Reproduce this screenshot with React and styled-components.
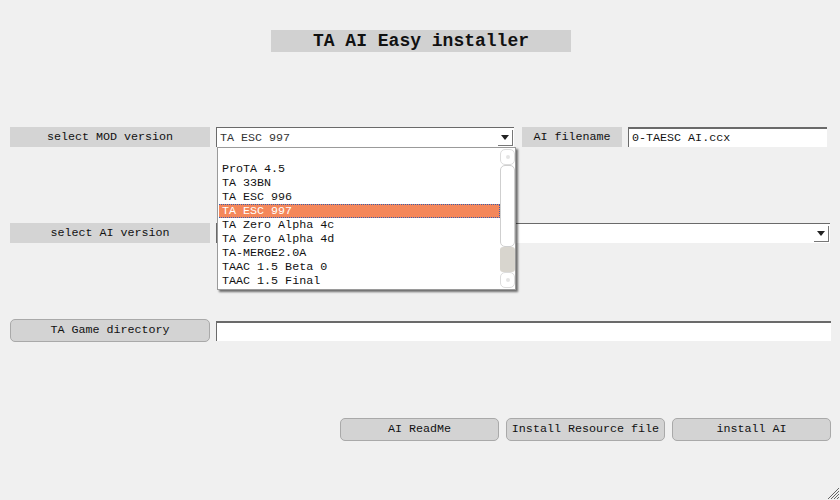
import React, { useState } from 'react';
import styled, { createGlobalStyle } from 'styled-components';

const GlobalStyle = createGlobalStyle`
  html, body {
    margin: 0;
    padding: 0;
    background: #f0f0f0;
  }
`;

const Page = styled.div`
  position: relative;
  width: 840px;
  height: 500px;
  overflow: hidden;
  background: #f0f0f0;
  font-family: "Liberation Mono", "Courier New", monospace;
  font-size: 11.7px;
  color: #111;
  display: flex;
  flex-direction: column;
`;

const TitleRow = styled.div`
  display: flex;
  justify-content: center;
  padding-top: 30px;
  padding-left: 2px;
`;

const Title = styled.div`
  width: 300px;
  height: 22px;
  background: #d1d1d1;
  font-size: 18px;
  font-weight: bold;
  line-height: 22px;
  text-align: center;
`;

const Row = styled.div`
  display: flex;
  align-items: center;
  padding-left: 10px;
  margin-top: ${(p) => p.top}px;
`;

const Label = styled.div`
  width: ${(p) => p.w || 200}px;
  height: 20px;
  line-height: 20px;
  background: #d4d4d4;
  text-align: center;
  flex-shrink: 0;
`;

const Gap = styled.div`
  width: ${(p) => p.w}px;
  flex-shrink: 0;
`;

const SelectBox = styled.div`
  position: relative;
  width: ${(p) => p.w}px;
  height: 20px;
  box-sizing: border-box;
  background: #fff;
  border-top: 1px solid #6a6a6a;
  border-left: 1px solid #6a6a6a;
  display: flex;
  align-items: center;
  flex-shrink: 0;
`;

const SelectText = styled.div`
  flex: 1;
  padding-left: 3px;
  color: #333;
`;

const ArrowBox = styled.div`
  width: 15px;
  height: 16px;
  box-sizing: border-box;
  margin-right: 1px;
  border-right: 1px solid #777;
  border-bottom: 1px solid #777;
  display: flex;
  align-items: center;
  justify-content: center;
  &::after {
    content: '';
    border-left: 4px solid transparent;
    border-right: 4px solid transparent;
    border-top: 5px solid #222;
    margin-top: 1px;
  }
`;

const TextInput = styled.div`
  width: ${(p) => p.w}px;
  height: 20px;
  box-sizing: border-box;
  background: #fff;
  border-top: 2px solid #6a6a6a;
  border-left: 1px solid #6a6a6a;
  padding-left: 3px;
  line-height: 18px;
  flex-shrink: 0;
`;

const DropList = styled.div`
  position: absolute;
  left: 0;
  top: 19px;
  width: 299px;
  height: 143px;
  box-sizing: border-box;
  background: #fff;
  border: 1px solid #9a9a9a;
  box-shadow: 2px 2px 2px rgba(0, 0, 0, 0.55);
  display: flex;
  z-index: 5;
`;

const Items = styled.div`
  flex: 1;
  padding-top: 14px;
`;

const Item = styled.div`
  height: 14px;
  line-height: 14px;
  box-sizing: border-box;
  white-space: nowrap;
  color: ${(p) => (p.active ? '#fff' : '#111')};
  background: ${(p) => (p.active ? '#f4875a' : 'transparent')};
  border: 1px dotted ${(p) => (p.active ? '#3a5fb0' : 'transparent')};
  border-left: none;
  margin: 0 0 0 1px;
  padding-left: 3px;
  display: flex;
  align-items: center;
`;

const Scroll = styled.div`
  width: 15px;
  display: flex;
  flex-direction: column;
  padding: 1px 0;
  box-sizing: border-box;
  background: #fff;
`;

const ScrollBtn = styled.div`
  height: 16px;
  border: 1px solid #dcdcdc;
  border-radius: 5px;
  box-sizing: border-box;
  display: flex;
  align-items: center;
  justify-content: center;
  &::after {
    content: '';
    width: 4px;
    height: 4px;
    border-radius: 2px;
    background: #e4e4e4;
  }
`;

const Thumb = styled.div`
  height: 82px;
  border: 1px solid #cfcfcf;
  border-radius: 5px;
  box-sizing: border-box;
  background: #fff;
`;

const Track = styled.div`
  flex: 1;
  background: #d8d5ce;
  border-radius: 3px;
`;

const Button = styled.div`
  width: ${(p) => p.w || 159}px;
  height: 23px;
  box-sizing: border-box;
  border: 1px solid #a9a9a9;
  border-radius: 5px;
  background: #d3d3d3;
  text-align: center;
  line-height: 21px;
  flex-shrink: 0;
`;

const ButtonRow = styled.div`
  display: flex;
  justify-content: flex-end;
  gap: 7px;
  padding-right: 9px;
  margin-top: 76px;
`;

const Grip = styled.svg`
  position: absolute;
  right: 0;
  bottom: 0;
`;

const mods = [
  'ProTA 4.5',
  'TA 33BN',
  'TA ESC 996',
  'TA ESC 997',
  'TA Zero Alpha 4c',
  'TA Zero Alpha 4d',
  'TA-MERGE2.0A',
  'TAAC 1.5 Beta 0',
  'TAAC 1.5 Final',
];

export default function App() {
  const [mod] = useState('TA ESC 997');
  return (
    <Page>
      <GlobalStyle />
      <TitleRow>
        <Title>TA AI Easy installer</Title>
      </TitleRow>

      <Row top={75}>
        <Label>select MOD version</Label>
        <Gap w={6} />
        <SelectBox w={298}>
          <SelectText>{mod}</SelectText>
          <ArrowBox />
          <DropList>
            <Items>
              {mods.map((m) => (
                <Item key={m} active={m === mod}>{m}</Item>
              ))}
            </Items>
            <Scroll>
              <ScrollBtn />
              <Thumb />
              <Track />
              <ScrollBtn />
            </Scroll>
          </DropList>
        </SelectBox>
        <Gap w={8} />
        <Label w={100}>AI filename</Label>
        <Gap w={6} />
        <TextInput w={199}>0-TAESC AI.ccx</TextInput>
      </Row>

      <Row top={76}>
        <Label>select AI version</Label>
        <Gap w={6} />
        <SelectBox w={614}>
          <SelectText />
          <ArrowBox />
        </SelectBox>
      </Row>

      <Row top={76}>
        <Button w={200}>TA Game directory</Button>
        <Gap w={6} />
        <TextInput w={615} />
      </Row>

      <ButtonRow>
        <Button>AI ReadMe</Button>
        <Button>Install Resource file</Button>
        <Button>install AI</Button>
      </ButtonRow>

      <Grip width="14" height="14" viewBox="0 0 14 14">
        <g stroke="#666" strokeWidth="1">
          <line x1="13" y1="2" x2="2" y2="13" />
          <line x1="13" y1="5" x2="5" y2="13" />
          <line x1="13" y1="8" x2="8" y2="13" />
          <line x1="13" y1="11" x2="11" y2="13" />
        </g>
      </Grip>
    </Page>
  );
}
